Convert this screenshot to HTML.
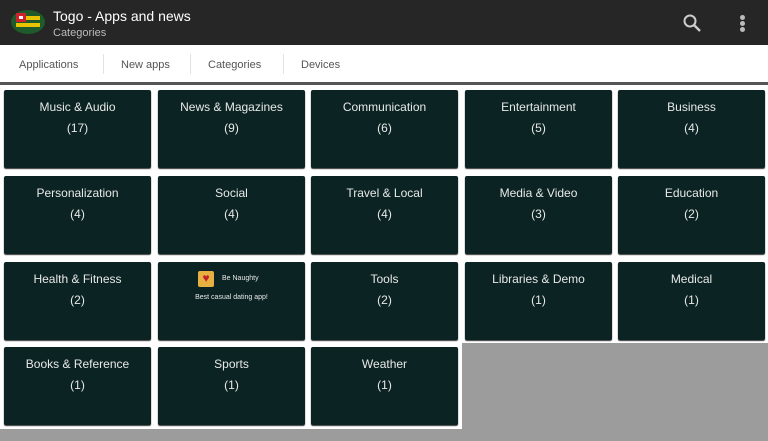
<!DOCTYPE html>
<html><head><style>
body{margin:0;width:768px;height:441px;overflow:hidden;background:#9c9c9c;font-family:"Liberation Sans",sans-serif;position:relative}
.hdr{position:absolute;left:0;top:0;width:768px;height:45px;background:#262626}
.tabs{position:absolute;left:0;top:45px;width:768px;height:37px;background:#fff;border-bottom:3px solid #555}
.tab{position:absolute;top:14px;font-size:11px;color:#555}
.sep{position:absolute;top:9px;width:1px;height:20px;background:#e2e2e2}
.wb{position:absolute;background:#fff}
.t{position:absolute;width:147px;height:78px;background:#0b2423;border-radius:2px;color:#e8e8e8;text-align:center;font-size:12px;box-shadow:0 1px 1px #333}
.t .a{position:absolute;top:10px;left:0;right:0}
.t .b{position:absolute;top:31px;left:0;right:0}
</style></head><body>
<div class="hdr">
<svg style="position:absolute;left:11px;top:10px" width="34" height="24" viewBox="0 0 34 24"><ellipse cx="17" cy="12" rx="17" ry="12" fill="#1e5a2a"/><rect x="5" y="6" width="24" height="4" fill="#e8c400"/><rect x="5" y="13" width="24" height="4" fill="#e8c400"/><rect x="5" y="3" width="10" height="9" fill="#d0202a"/><rect x="8" y="6" width="4" height="3" fill="#fff"/></svg>
<div style="position:absolute;left:53px;top:8px;color:#fff;font-size:14px">Togo - Apps and news</div>
<div style="position:absolute;left:53px;top:27px;color:#bbb;font-size:11px">Categories</div>
<svg style="position:absolute;left:682px;top:13px" width="20" height="20" viewBox="0 0 20 20"><circle cx="8" cy="8" r="5.5" fill="none" stroke="#ccc" stroke-width="2"/><path d="M12 12l6 6" stroke="#ccc" stroke-width="2.4"/></svg>
<div style="position:absolute;left:740px;top:15px;width:5px;height:5px;border-radius:50%;background:#bbb;box-shadow:0 6px 0 #bbb,0 12px 0 #bbb"></div>
</div>
<div class="tabs">
<span class="tab" style="left:19px">Applications</span><div class="sep" style="left:103px"></div>
<span class="tab" style="left:121px">New apps</span><div class="sep" style="left:190px"></div>
<span class="tab" style="left:208px">Categories</span><div class="sep" style="left:283px"></div>
<span class="tab" style="left:301px">Devices</span>
</div>
<div class="wb" style="left:0;top:85px;width:768px;height:258px"></div>
<div class="wb" style="left:0;top:343px;width:462px;height:86px"></div>
<div class="t" style="left:4px;top:90px"><div class="a">Music &amp; Audio</div><div class="b">(17)</div></div>
<div class="t" style="left:158px;top:90px"><div class="a">News &amp; Magazines</div><div class="b">(9)</div></div>
<div class="t" style="left:311px;top:90px"><div class="a">Communication</div><div class="b">(6)</div></div>
<div class="t" style="left:465px;top:90px"><div class="a">Entertainment</div><div class="b">(5)</div></div>
<div class="t" style="left:618px;top:90px"><div class="a">Business</div><div class="b">(4)</div></div>
<div class="t" style="left:4px;top:176px"><div class="a">Personalization</div><div class="b">(4)</div></div>
<div class="t" style="left:158px;top:176px"><div class="a">Social</div><div class="b">(4)</div></div>
<div class="t" style="left:311px;top:176px"><div class="a">Travel &amp; Local</div><div class="b">(4)</div></div>
<div class="t" style="left:465px;top:176px"><div class="a">Media &amp; Video</div><div class="b">(3)</div></div>
<div class="t" style="left:618px;top:176px"><div class="a">Education</div><div class="b">(2)</div></div>
<div class="t" style="left:4px;top:262px"><div class="a">Health &amp; Fitness</div><div class="b">(2)</div></div>
<div class="t" style="left:158px;top:262px">
<div style="position:absolute;left:40px;top:9px;width:16px;height:16px;background:#e8b040;border-radius:2px"><div style="color:#c0202a;font-size:12px;line-height:15px">♥</div></div>
<div style="position:absolute;left:64px;top:13px;font-size:7px">Be Naughty</div>
<div style="position:absolute;left:0;right:0;top:32px;font-size:7px">Best casual dating app!</div>
</div>
<div class="t" style="left:311px;top:262px"><div class="a">Tools</div><div class="b">(2)</div></div>
<div class="t" style="left:465px;top:262px"><div class="a">Libraries &amp; Demo</div><div class="b">(1)</div></div>
<div class="t" style="left:618px;top:262px"><div class="a">Medical</div><div class="b">(1)</div></div>
<div class="t" style="left:4px;top:347px"><div class="a">Books &amp; Reference</div><div class="b">(1)</div></div>
<div class="t" style="left:158px;top:347px"><div class="a">Sports</div><div class="b">(1)</div></div>
<div class="t" style="left:311px;top:347px"><div class="a">Weather</div><div class="b">(1)</div></div>
</body></html>
